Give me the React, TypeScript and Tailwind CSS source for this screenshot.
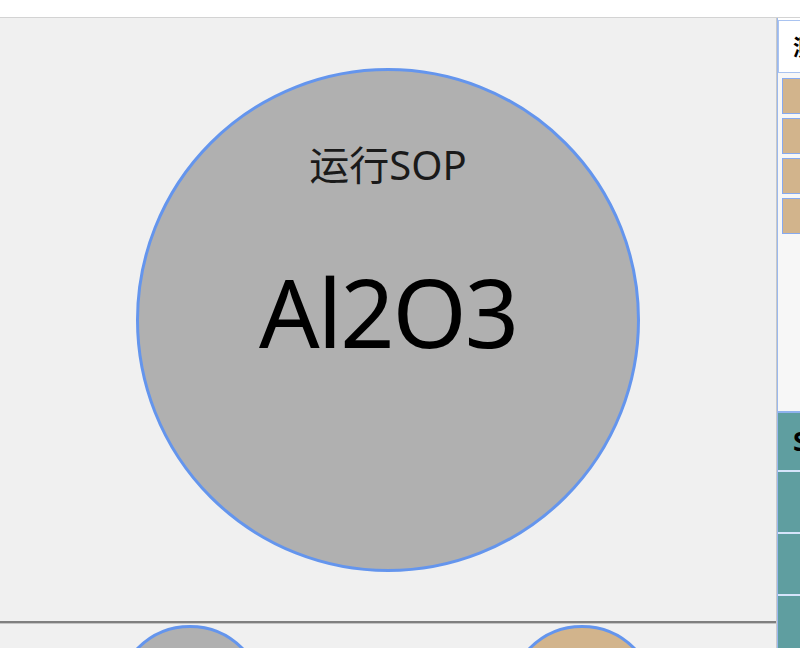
const font = { fontFamily: '"Noto Sans", "Noto Sans CJK SC", sans-serif' };

const sideItems = ['al2o3', 'sio2', 'tin', 'hfo2'];
const sopButtons = ['sop-1', 'sop-2', 'sop-3'];

const SidePanel: React.FC = () => (
	<div className="flex-1 overflow-hidden border-l border-[#9ab8ee] pt-[2px]">
		<div className="flex flex-col w-[220px] h-full">
			{/* Header */}
			<div className="h-[53px] shrink-0 bg-white border border-[#a9c3f0] flex items-center pl-[14px] text-[22px] font-bold text-black">
				测量项目
			</div>

			{/* Material list */}
			<div className="h-[338px] shrink-0 bg-[#f7f7f7] flex flex-col gap-[4px] pt-[5px] pl-[4px] pr-2">
				{sideItems.map((item) => (
					<div key={item} className="h-[36px] bg-[#d2b48c] border border-[#86aaf0]" />
				))}
			</div>

			{/* SOP section */}
			<div className="flex-1 bg-[#5f9ea0] border-t-2 border-[#8fb2ee] flex flex-col">
				<div className="h-[57px] shrink-0 flex items-center pl-[15px] text-[26px] font-bold text-black">
					SOP列表
				</div>
				{sopButtons.map((b) => (
					<div key={b} className="h-[62px] shrink-0 border-t-2 border-[#d6e4fb]" />
				))}
			</div>
		</div>
	</div>
);

export default function App() {
	return (
		<div className="w-[800px] h-[648px] overflow-hidden bg-white flex flex-col" style={font}>
			{/* Top strip */}
			<div className="h-[18px] shrink-0 bg-white border-b border-[#d3d3d3]" />

			<div className="flex flex-1 min-h-0">
				{/* Main area */}
				<div className="w-[777px] shrink-0 flex flex-col border-r border-[#c9c9c9]">
					<div className="h-[603px] shrink-0 bg-[#f0f0f0] flex items-center justify-center">
						<div className="w-[504px] h-[504px] rounded-full bg-[#b0b0b0] border-[3px] border-[#6495ed] flex flex-col items-center pt-[74px]">
							<div className="text-[40px] leading-[40px] text-[#1a1a1a]">运行SOP</div>
							<div className="mt-[79px] text-[95px] leading-none text-black tracking-[-2px]">Al2O3</div>
						</div>
					</div>

					{/* Divider */}
					<div className="h-[2px] shrink-0 bg-[#7f7f7f]" />
					<div className="h-[1px] shrink-0 bg-[#c4c4c4]" />

					{/* Next row of circles */}
					<div className="flex-1 bg-[#f0f0f0] overflow-hidden flex items-start pl-[115px] gap-[242px] pt-[1px]">
						<div className="w-[150px] h-[150px] shrink-0 rounded-full bg-[#b0b0b0] border-[3px] border-[#6495ed]" />
						<div className="w-[150px] h-[150px] shrink-0 rounded-full bg-[#d2b48c] border-[3px] border-[#6495ed]" />
					</div>
				</div>

				<SidePanel />
			</div>
		</div>
	);
}
